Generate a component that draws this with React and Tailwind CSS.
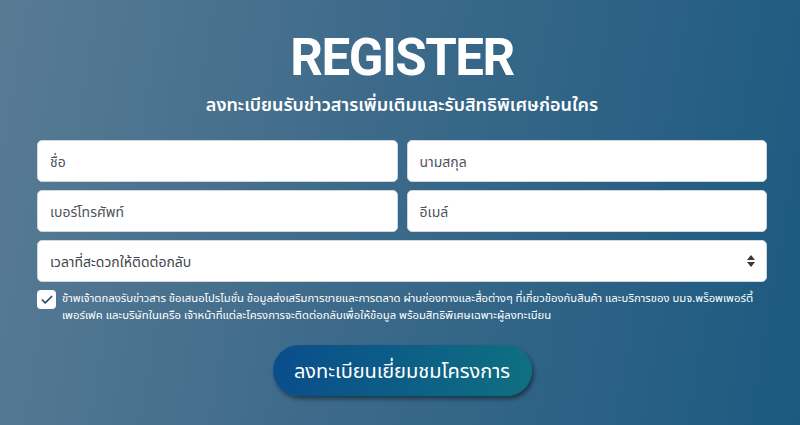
import React, { useState } from 'react';
import { Check } from 'lucide-react';

const thai = { fontFamily: '"Noto Sans", "Noto Sans Thai", "DejaVu Sans", sans-serif' };

function Field({ placeholder }) {
  return (
    <input
      type="text"
      placeholder={placeholder}
      className="h-[42px] w-full rounded-[5px] border border-gray-300 bg-white px-3 text-[14px] text-[#495057] placeholder:text-[#4f555b] outline-none"
    />
  );
}

export default function App() {
  const [agree, setAgree] = useState(true);

  return (
    <div
      className="h-[425px] w-[800px] overflow-hidden bg-[linear-gradient(100deg,#587b94_0%,#3d6a8a_45%,#1c5a80_100%)] text-white"
      style={thai}
    >
      <div className="flex flex-col items-center pl-[37px] pr-[33px] pt-[30px]">
        <h1
          className="text-[51px] font-bold leading-[56px] tracking-[-1.5px]"
          style={{ fontFamily: 'Roboto, "Liberation Sans", sans-serif' }}
        >
          REGISTER
        </h1>
        <p className="mt-[6px] text-[18px] font-semibold leading-[24px]">
          ลงทะเบียนรับข่าวสารเพิ่มเติมและรับสิทธิพิเศษก่อนใคร
        </p>

        {/* form */}
        <div className="mt-[24px] grid w-full grid-cols-2 gap-x-[9px] gap-y-[8px]">
          <Field placeholder="ชื่อ" />
          <Field placeholder="นามสกุล" />
          <Field placeholder="เบอร์โทรศัพท์" />
          <Field placeholder="อีเมล์" />
          <div className="relative col-span-2">
            <select
              defaultValue=""
              className="h-[42px] w-full appearance-none rounded-[5px] border border-gray-300 bg-white px-3 text-[14px] text-[#3f454b] outline-none"
            >
              <option value="">เวลาที่สะดวกให้ติดต่อกลับ</option>
              <option>09.00 - 12.00</option>
              <option>13.00 - 17.00</option>
            </select>
            <svg
              className="pointer-events-none absolute right-[12px] top-[15px]"
              width="8"
              height="12"
              viewBox="0 0 8 12"
            >
              <path d="M4 0L8 5H0z" fill="#343a40" />
              <path d="M4 12L0 7h8z" fill="#343a40" />
            </svg>
          </div>
        </div>

        {/* consent */}
        <label className="mt-[7px] flex w-full cursor-pointer items-start gap-[6px]">
          <span
            onClick={() => setAgree(!agree)}
            className="mt-[1px] flex h-[19px] w-[19px] shrink-0 items-center justify-center rounded-[4px] bg-white"
          >
            {agree && <Check className="h-[14px] w-[14px] text-[#2b4e6c]" strokeWidth={3} />}
          </span>
          <span className="whitespace-nowrap text-[11.3px] leading-[17px] text-white">
            ข้าพเจ้าตกลงรับข่าวสาร ข้อเสนอโปรโมชั่น ข้อมูลส่งเสริมการขายและการตลาด ผ่านช่องทางและสื่อต่างๆ ที่เกี่ยวข้องกับสินค้า และบริการของ บมจ.พร็อพเพอร์ตี้
            <br />
            เพอร์เฟค และบริษัทในเครือ เจ้าหน้าที่แต่ละโครงการจะติดต่อกลับเพื่อให้ข้อมูล พร้อมสิทธิพิเศษเฉพาะผู้ลงทะเบียน
          </span>
        </label>

        <button className="mt-[22px] h-[51px] w-[259px] rounded-full bg-[linear-gradient(90deg,#0a4d8c_0%,#0f6f80_100%)] text-[20px] text-white shadow-[2px_3px_4px_rgba(0,0,0,0.45)]">
          ลงทะเบียนเยี่ยมชมโครงการ
        </button>
      </div>
    </div>
  );
}
